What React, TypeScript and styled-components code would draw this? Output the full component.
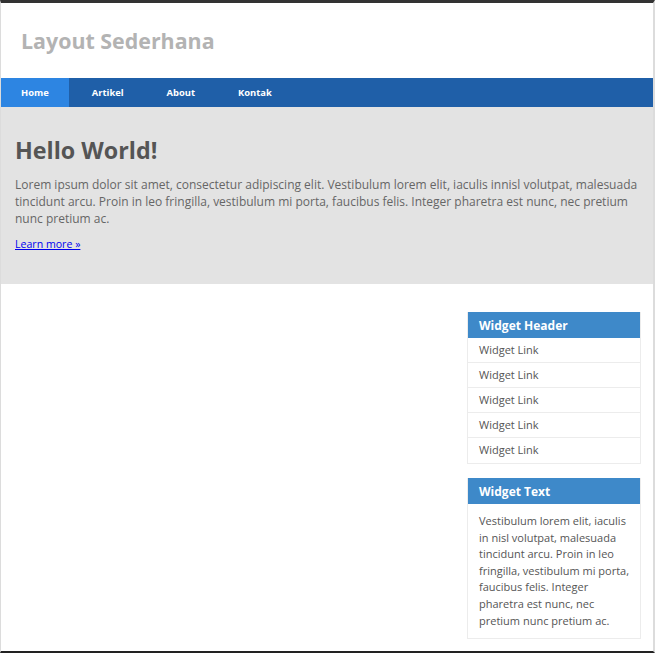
import React from "react"
import styled, { createGlobalStyle } from "styled-components"

const GlobalStyle = createGlobalStyle`
	html, body {
		margin: 0;
		padding: 0;
		background: #fff;
	}
	body {
		font-family: "Open Sans", "Liberation Sans", sans-serif;
	}
`

const navItems = ["Home", "Artikel", "About", "Kontak"]

const widgetLinks = ["Widget Link", "Widget Link", "Widget Link", "Widget Link", "Widget Link"]

const App = () => {
	return (
		<>
			<GlobalStyle />
			<Frame>
				<Header>
					<SiteTitle>Layout Sederhana</SiteTitle>
				</Header>
				<Nav>
					{navItems.map((item, i) => (
						<NavItem key={item} $active={i === 0}>
							{item}
						</NavItem>
					))}
				</Nav>
				<Hero>
					<HeroTitle>Hello World!</HeroTitle>
					<HeroText>
						Lorem ipsum dolor sit amet, consectetur adipiscing elit. Vestibulum lorem elit, iaculis innisl
						volutpat, malesuada tincidunt arcu. Proin in leo fringilla, vestibulum mi porta, faucibus felis.
						Integer pharetra est nunc, nec pretium nunc pretium ac.
					</HeroText>
					<LearnMore href="#">Learn more »</LearnMore>
				</Hero>
				<Main>
					<Content />
					<Sidebar>
						<Widget>
							<WidgetHeader>Widget Header</WidgetHeader>
							{widgetLinks.map((link, i) => (
								<WidgetLink key={i}>{link}</WidgetLink>
							))}
						</Widget>
						<Widget>
							<WidgetHeader>Widget Text</WidgetHeader>
							<WidgetBody>
								Vestibulum lorem elit, iaculis in nisl volutpat, malesuada tincidunt arcu. Proin in leo
								fringilla, vestibulum mi porta, faucibus felis. Integer pharetra est nunc, nec pretium nunc
								pretium ac.
							</WidgetBody>
						</Widget>
					</Sidebar>
				</Main>
			</Frame>
		</>
	)
}

export default App

const Frame = styled.div`
	box-sizing: border-box;
	height: 100vh;
	overflow: hidden;
	display: flex;
	flex-direction: column;
	border-top: 3px solid #333;
	border-bottom: 2px solid #222;
	border-left: 1px solid #dcdcdc;
	border-right: 2px solid #dcdcdc;
`

const Header = styled.header`
	height: 75px;
	display: flex;
	align-items: center;
	padding-left: 20px;
	box-sizing: border-box;
`

const SiteTitle = styled.h1`
	margin: 0;
	font-size: 21.4px;
	font-weight: 700;
	color: #b3b3b3;
`

const Nav = styled.nav`
	display: flex;
	gap: 3px;
	height: 29px;
	background: #1f5fa8;
`

const NavItem = styled.a<{ $active?: boolean }>`
	display: flex;
	align-items: center;
	padding: 0 20px;
	font-size: 9.4px;
	font-weight: 700;
	color: #fff;
	text-decoration: none;
	background: ${(p) => (p.$active ? "#2d85e2" : "transparent")};
`

const Hero = styled.section`
	background: #e3e3e3;
	padding: 27px 14px 32px;
	height: 177px;
	box-sizing: border-box;
`

const HeroTitle = styled.h2`
	margin: 0 0 10px;
	font-size: 23.3px;
	font-weight: 700;
	color: #555;
	line-height: 32px;
`

const HeroText = styled.p`
	margin: 0 0 4px;
	font-size: 12px;
	line-height: 17px;
	color: #666;
`

const LearnMore = styled.a`
	font-size: 10.6px;
	line-height: 15px;
	color: #00e;
`

const Main = styled.div`
	display: flex;
	flex: 1;
	padding: 28px 12px 0 0;
`

const Content = styled.div`
	flex: 1;
`

const Sidebar = styled.aside`
	width: 174px;
	display: flex;
	flex-direction: column;
	gap: 14px;
`

const Widget = styled.div`
	border: 1px solid #ececec;
	border-top: none;
`

const WidgetHeader = styled.h3`
	margin: 0;
	height: 26px;
	display: flex;
	align-items: center;
	padding: 0 11px;
	background: #3e89c9;
	color: #fff;
	font-size: 12px;
	font-weight: 700;
`

const WidgetLink = styled.a`
	display: flex;
	align-items: center;
	padding: 0 11px 2px;
	box-sizing: border-box;
	height: 25px;
	font-size: 11px;
	color: #555;
	text-decoration: none;
	border-bottom: 1px solid #ececec;

	&:last-child {
		border-bottom: none;
	}
`

const WidgetBody = styled.p`
	margin: 0;
	padding: 9px 10px 9px 11px;
	font-size: 11px;
	line-height: 16.6px;
	color: #555;
`
